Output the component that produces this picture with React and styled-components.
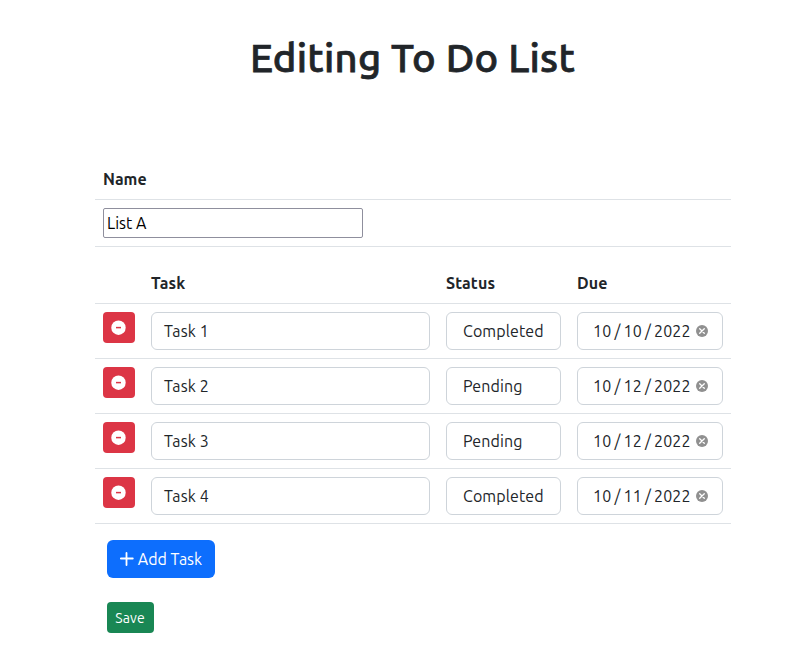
import React from "react";
import styled, { createGlobalStyle } from "styled-components";

const GlobalStyle = createGlobalStyle`
  *, *::before, *::after { box-sizing: border-box; }
  body {
    margin: 0;
    background: #fff;
    color: #212529;
    font: 400 16px/24px Ubuntu, "Noto Sans", sans-serif;
  }
  button, input { font: inherit; letter-spacing: inherit; }
`;

const Page = styled.main`
  width: 636px;
  margin-left: 95px;
  padding-top: 34px;
`;

const Title = styled.h1`
  margin: 0 0 77px;
  padding-right: 1px;
  height: 48px;
  font-size: 40px;
  line-height: 48px;
  font-weight: 500;
  text-align: center;
  white-space: nowrap;
  letter-spacing: 0.28px;
  -webkit-text-stroke: 0.75px #212529;
`;

const Table = styled.section`
  margin-bottom: 16px;
`;

const Row = styled.div`
  display: grid;
  grid-template-columns: ${(p) => (p.$tasks ? "48px 295px 131px 162px" : "1fr")};
  align-items: start;
  border-bottom: 1px solid #dee2e6;
`;

const Cell = styled.div`
  padding: 8px;
`;

const HeadCell = styled(Cell)`
  font-weight: 700;
  letter-spacing: ${(p) => p.$track || "0.15px"};
`;

const NameInput = styled.input`
  display: block;
  width: 260px;
  height: 30px;
  padding: 1px 3px;
  border: 1px solid #8f8f9d;
  border-radius: 2px;
  color: #000;
  background: #fff;
  outline: none;
`;

const Field = styled.div`
  display: flex;
  align-items: center;
  height: 38px;
  padding: 0 ${(p) => (p.$inset ? "16px" : "12px")};
  border: 1px solid #ced4da;
  border-radius: 6px;
  white-space: nowrap;
  letter-spacing: 0.1px;
`;

const DateField = styled(Field)`
  padding: 0 12px 0 15px;
`;

const DatePart = styled.span`
  flex: none;
  width: ${(p) => p.$w}px;
  letter-spacing: 0.15px;
`;

const Slash = styled.span`
  flex: none;
  width: 12px;
  text-align: center;
`;

const ClearIcon = styled.svg`
  display: block;
  margin-left: 6px;
  flex: none;
`;

const Button = styled.button`
  display: flex;
  align-items: center;
  justify-content: center;
  padding: 0;
  border: 0;
  color: #fff;
`;

const RemoveButton = styled(Button)`
  width: 32px;
  height: 31px;
  padding: 0 1px 0 0;
  border-radius: 4px;
  background: #dc3545;
`;

const AddButton = styled(Button)`
  width: 108px;
  height: 38px;
  gap: 4px;
  border-radius: 6px;
  background: #0d6efd;
`;

const SaveButton = styled(Button)`
  width: 47px;
  height: 31px;
  padding-right: 1px;
  border-radius: 4px;
  background: #198754;
  font-size: 14px;
  letter-spacing: 0.1px;
`;

const Actions = styled.div`
  display: flex;
  flex-direction: column;
  align-items: flex-start;
  gap: 24px;
  padding-left: 12px;
`;

const tasks = [
  { name: "Task 1", status: "Completed", due: ["10", "10", "2022"] },
  { name: "Task 2", status: "Pending", due: ["10", "12", "2022"] },
  { name: "Task 3", status: "Pending", due: ["10", "12", "2022"] },
  { name: "Task 4", status: "Completed", due: ["10", "11", "2022"] },
];

function TaskRow({ task }) {
  const [month, day, year] = task.due;
  return (
    <Row $tasks>
      <Cell>
        <RemoveButton aria-label={`Remove ${task.name}`}>
          <svg width="15" height="15" viewBox="0 0 15 15">
            <circle cx="7.5" cy="7.7" r="7.2" fill="#fff" />
            <path d="M5 7.6h5" stroke="#dc3545" strokeWidth="1.5" />
          </svg>
        </RemoveButton>
      </Cell>
      <Cell><Field>{task.name}</Field></Cell>
      <Cell><Field $inset>{task.status}</Field></Cell>
      <Cell>
        <DateField>
          <DatePart $w={18.5}>{month}</DatePart>
          <Slash>/</Slash>
          <DatePart $w={18.5}>{day}</DatePart>
          <Slash>/</Slash>
          <DatePart $w={36}>{year}</DatePart>
          <ClearIcon width="12" height="12" viewBox="0 0 12 12">
            <circle cx="6" cy="6" r="6" fill="#909090" />
            <path d="M3.7 3.7l4.6 4.6M8.3 3.7L3.7 8.3" stroke="#fff" strokeWidth="1.3" strokeLinecap="round" />
          </ClearIcon>
        </DateField>
      </Cell>
    </Row>
  );
}

export default function App() {
  return (
    <>
      <GlobalStyle />
      <Page>
        <Title>Editing To Do List</Title>
        <Table>
          <Row><HeadCell $track="0">Name</HeadCell></Row>
          <Row><Cell><NameInput defaultValue="List A" /></Cell></Row>
        </Table>
        <Table>
          <Row $tasks>
            <HeadCell />
            <HeadCell>Task</HeadCell>
            <HeadCell>Status</HeadCell>
            <HeadCell>Due</HeadCell>
          </Row>
          {tasks.map((task) => <TaskRow key={task.name} task={task} />)}
        </Table>
        <Actions>
          <AddButton>
            <svg width="14" height="14" viewBox="0 0 14 14">
              <path d="M6.5 .9v12.2M.8 6.5h12" stroke="#fff" strokeWidth="1.8" strokeLinecap="round" />
            </svg>
            Add Task
          </AddButton>
          <SaveButton>Save</SaveButton>
        </Actions>
      </Page>
    </>
  );
}
